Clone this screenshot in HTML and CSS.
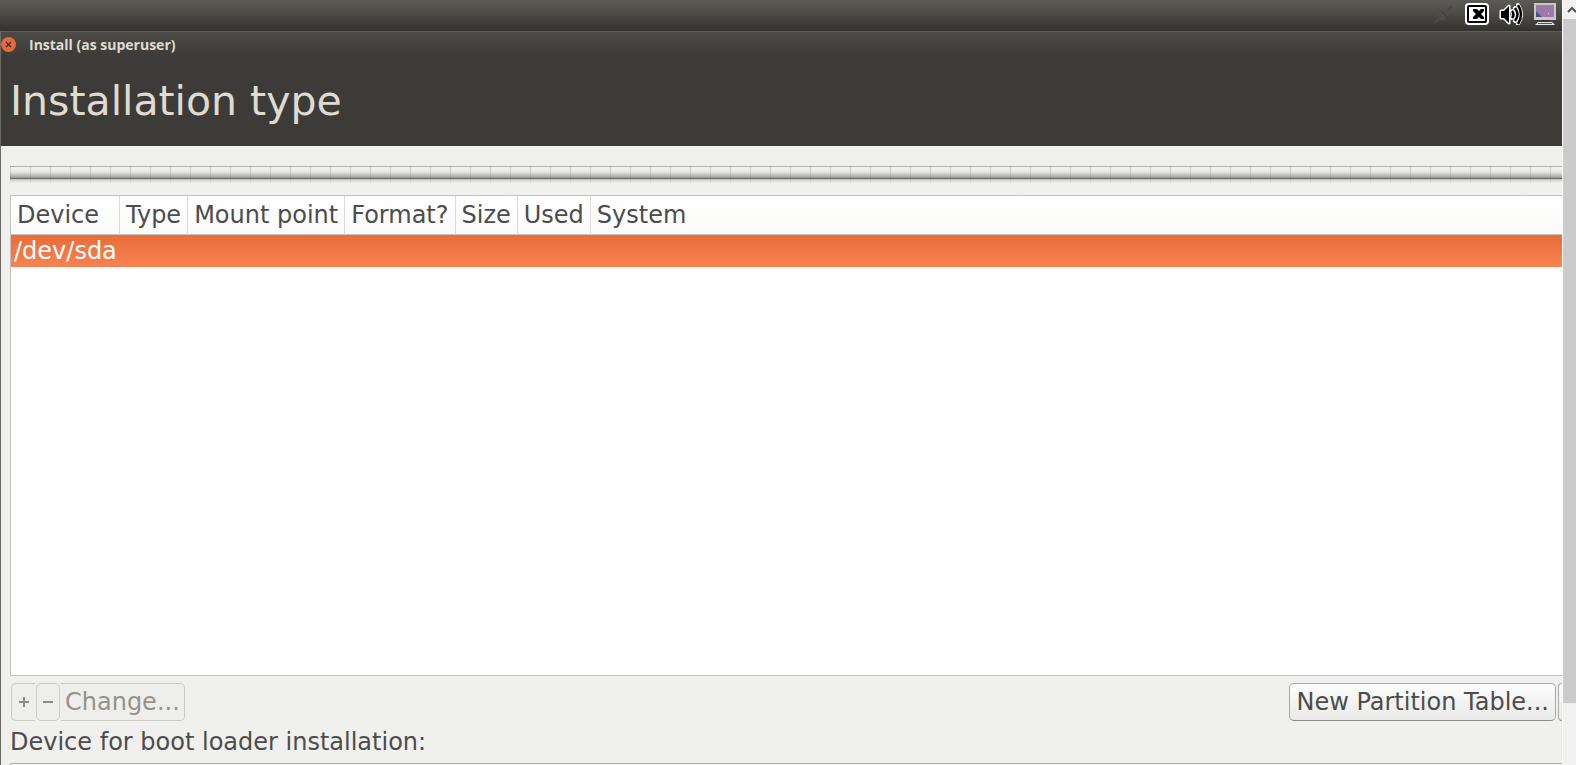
FILE: index.html
```html
<!DOCTYPE html>
<html lang="en">
<head>
    <meta charset="UTF-8">
    <meta name="viewport" content="width=device-width, initial-scale=1.0">
    <title>Install (as superuser)</title>
    <link rel="stylesheet" href="styles.css">
</head>
<body>
    <div class="viewer">
        <div class="desktop">
            <div class="panel">
                <svg width="24" height="24" viewBox="0 0 24 24" role="img" aria-label="Network">
                    <path d="M4 22l6-6M15 10l6-5" stroke="#4b4a46" stroke-width="2"/>
                    <path d="M8 13l3-2 5 5-3 3H9l-2-3z" fill="#4e4d49"/>
                    <path d="M12 10l3-2h3l1 3-2 4z" fill="#4e4d49"/>
                    <path d="M10 10l7 7" stroke="#3a3935"/>
                </svg>
                <svg width="24" height="24" viewBox="0 0 24 24" role="img" aria-label="Keyboard">
                    <rect x="0" y="2" width="24" height="22" rx="4" fill="#fff"/>
                    <rect x="3" y="5" width="18" height="16" rx="1" fill="#fff" stroke="#000" stroke-width="2"/>
                    <path d="M8 8h4l2 2 2-2h3v2l-3 3 3 3v2h-3l-2-2-2 2H8v-2l3-3-3-3z" fill="#000"/>
                </svg>
                <svg width="24" height="24" viewBox="0 0 24 24" role="img" aria-label="Sound">
                    <g stroke="#fff" stroke-linejoin="round" stroke-linecap="round" fill="none">
                        <path d="M2 10h3l5-5v17l-5-5H2z" stroke-width="3"/>
                        <path d="M13 10q3 3.500 0 7M16 7q5 6.500 0 13M19 4q6 9.500 0 19" stroke-width="4"/>
                    </g>
                    <path d="M2 10h3l5-5v17l-5-5H2z" fill="#000"/>
                    <path d="M13 10q3 3.500 0 7M16 7q5 6.500 0 13M19 4q6 9.500 0 19" stroke="#000" stroke-width="2.500" fill="none"/>
                </svg>
                <svg width="24" height="24" viewBox="0 0 24 24" role="img" aria-label="Display">
                    <rect x="1" y="2" width="22" height="17" fill="#c9c9c9"/>
                    <rect x="3" y="4" width="18" height="12" fill="#9a7bab"/>
                    <path d="M3 10l6 6H3z" fill="#4b4f86"/>
                    <path d="M15 12h1v1h-1z" fill="#e8d0c0"/>
                    <path d="M8 19h8v2H8z" fill="#33322f"/>
                    <path d="M5 21h14l3 3H2z" fill="#e6e6e6"/>
                    <path d="M5 22h14v1H5z" fill="#555"/>
                </svg>
            </div>

            <div class="window">
                <div class="titlebar">
                    <button class="close" type="button" aria-label="Close">
                        <svg width="15" height="15" viewBox="0 0 15 15">
                            <circle cx="7.500" cy="7.500" r="7.500" fill="#e9683c"/>
                            <path d="M5 5l5 5M10 5l-5 5" stroke="#4a2a1c" stroke-width="1.300"/>
                        </svg>
                    </button>
                    <span>Install (as superuser)</span>
                </div>
                <h1>Installation type</h1>

                <div class="content">
                    <div class="disk-bar"></div>

                    <div class="partitions">
                        <table>
                            <thead>
                                <tr>
                                    <th>Device</th>
                                    <th>Type</th>
                                    <th>Mount point</th>
                                    <th>Format?</th>
                                    <th>Size</th>
                                    <th>Used</th>
                                    <th class="last">System</th>
                                </tr>
                            </thead>
                            <tbody>
                                <tr>
                                    <td>/dev/sda</td>
                                    <td></td>
                                    <td></td>
                                    <td></td>
                                    <td></td>
                                    <td></td>
                                    <td></td>
                                </tr>
                            </tbody>
                        </table>
                    </div>

                    <div class="actions">
                        <button class="btn small open" type="button" aria-label="Add" disabled><svg width="12" height="12" viewBox="0 0 12 12"><path d="M1 6h10M6 1v10" stroke="#8f8c86" stroke-width="2"/></svg></button>
                        <button class="btn small" type="button" aria-label="Remove" disabled><svg width="12" height="12" viewBox="0 0 12 12"><path d="M1 6h10" stroke="#8f8c86" stroke-width="2"/></svg></button>
                        <button class="btn change" type="button" disabled>Change...</button>
                        <button class="btn new-table" type="button">New Partition Table...</button>
                        <button class="btn revert" type="button" aria-label="Revert"></button>
                    </div>

                    <label for="bootDevice">Device for boot loader installation:</label>
                    <select id="bootDevice" class="boot-device"></select>
                </div>
            </div>
        </div>

        <div class="scrollbar">
            <button class="scroll-up" type="button" aria-label="Scroll up">
                <svg width="13" height="19" viewBox="0 0 13 19"><path d="M5 12l4-4 4 4" fill="none" stroke="#505050" stroke-width="2"/></svg>
            </button>
            <div class="thumb"></div>
            <div class="track"></div>
        </div>
    </div>
</body>
</html>
```

FILE: styles.css
```css
* {
    box-sizing: border-box;
}

body {
    margin: 0;
    font-family: "DejaVu Sans", sans-serif;
    font-size: 24px;
    color: #4c4c4c;
    background-color: #fff;
}

.viewer {
    display: flex;
    height: 100vh;
    overflow: hidden;
}

.desktop {
    flex: 1;
    min-width: 0;
    margin-right: 1px;
    display: flex;
    flex-direction: column;
    overflow: hidden;
    background-color: #f0f0ee;
}

/* top panel */
.panel {
    flex: none;
    display: flex;
    justify-content: flex-end;
    gap: 10px;
    height: 31px;
    padding: 1px 5px 0 0;
    background: linear-gradient(#5b5a54 0, #55544e 20%, #3c3b37 80%, #32312d 100%);
}

.window {
    flex: 1;
    min-height: 0;
    display: flex;
    flex-direction: column;
    border-left: 1px solid #6b6a66;
}

.titlebar {
    flex: none;
    display: flex;
    align-items: center;
    gap: 13px;
    height: 26px;
    border-top: 1px solid #5f5e58;
    background: linear-gradient(#4b4a45, #3c3b37);
    color: #dfdbd2;
    font-family: "Open Sans", sans-serif;
    font-size: 14px;
    font-weight: bold;
}

.close {
    display: flex;
    padding: 0;
    border: none;
    background: none;
}

h1 {
    flex: none;
    height: 89px;
    margin: 0;
    padding: 20px 9px 0;
    font-size: 41px;
    font-weight: normal;
    line-height: 48px;
    color: #dfdbd2;
    background-color: #3c3b37;
}

.content {
    flex: 1;
    min-height: 0;
    display: flex;
    flex-direction: column;
    padding: 20px 0 0 9px;
}

/* empty disk usage bar, with its reflection below */
.disk-bar {
    flex: none;
    height: 19px;
    margin-bottom: 10px;
    background:
        linear-gradient(transparent 13px, #f0f0ee 18px),
        repeating-linear-gradient(90deg, rgba(120, 110, 110, 0.25) 0 1px, transparent 1px 20px),
        linear-gradient(#b0b0ae 0 1px, #f2f2f2 1px, #e8e8e7 6px, #9a9998 12px, #6c6a69 12px 13px, #c4c2c1 13px, #f0f0ee 19px);
}

.partitions {
    flex: 1;
    border: 1px solid #c3c2c0;
    border-right: none;
    background-color: #fff;
}

table {
    width: 100%;
    border-collapse: separate;
    border-spacing: 0;
}

th {
    height: 39px;
    padding: 0 6px;
    border-right: 1px solid #dcdcda;
    border-bottom: 1px solid #c3c2c0;
    background: linear-gradient(#fff, #fafaf9);
    font-weight: normal;
    line-height: 38px;
    text-align: left;
    white-space: nowrap;
}

th:first-child {
    min-width: 109px;
}

th.last {
    width: 100%;
    border-right: none;
}

tbody tr {
    background: linear-gradient(#e96d39, #f88251);
}

td {
    height: 32px;
    padding: 0 3px;
    color: #fff;
    line-height: 32px;
}

.actions {
    flex: none;
    display: flex;
    padding: 7px 0 5px 1px;
    overflow: hidden;
}

.btn {
    flex: none;
    height: 38px;
    padding: 0 6px;
    border: 1px solid #aaa8a5;
    border-bottom-color: #8e8c89;
    border-radius: 5px;
    background: linear-gradient(#fdfdfd, #e9e9e8);
    color: #4c4c4c;
    font-family: inherit;
    font-size: 24px;
    line-height: 36px;
    white-space: nowrap;
}

.btn:disabled {
    border-color: #c9c8c5;
    background: #eeeeec;
    color: #96928b;
}

.small {
    display: flex;
    align-items: center;
    justify-content: center;
    width: 24px;
    margin-right: 1px;
    padding: 0;
}

.btn.open {
    border-right: none;
    border-radius: 5px 0 0 5px;
}

.btn.change {
    padding: 0 4px;
    border-left: none;
    border-radius: 0 5px 5px 0;
}

.new-table {
    margin-left: auto;
}

.revert {
    width: 4px;
    margin-left: 2px;
    padding: 0;
    border-right: none;
    border-radius: 5px 0 0 5px;
}

label {
    flex: none;
    line-height: 32px;
}

.boot-device {
    flex: none;
    height: 2px;
    margin-top: 5px;
    border: 1px solid #aaa8a5;
    border-width: 1px 0 0 1px;
    border-radius: 5px 0 0 0;
    background-color: #f6f6f5;
    appearance: none;
}

.scrollbar {
    flex: none;
    display: flex;
    flex-direction: column;
    width: 13px;
    background-color: #f1f1f1;
}

.scroll-up {
    flex: none;
    display: flex;
    height: 19px;
    padding: 0;
    border: none;
    background-color: #f1f1f1;
}

.thumb {
    flex: 11;
    background-color: #cbcbcb;
}

.track {
    flex: 1;
}
```
